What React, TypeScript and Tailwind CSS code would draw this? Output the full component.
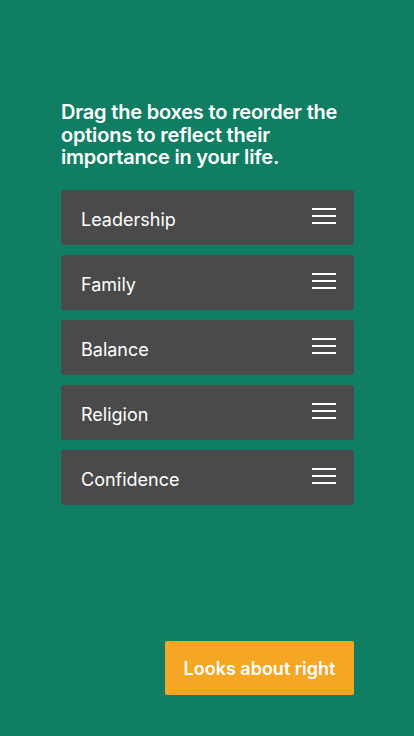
import React from 'react';

const options = ['Leadership', 'Family', 'Balance', 'Religion', 'Confidence'];

const Handle: React.FC = () => (
  <div className="flex flex-col gap-[5px] w-6 -mt-[3px]">
    <span className="block h-[2px] bg-white" />
    <span className="block h-[2px] bg-white" />
    <span className="block h-[2px] bg-white" />
  </div>
);

const App: React.FC = () => {
  return (
    <div
      className="min-h-screen bg-[#107e62] flex flex-col pl-[61px] pr-[60px] pt-[101px] pb-[41px]"
      style={{ fontFamily: 'Inter, "Noto Sans", sans-serif' }}
    >
      <h1 className="text-white font-semibold text-[20px] leading-[22.5px] tracking-[-0.2px]">
        Drag the boxes to reorder the options to reflect their importance in your life.
      </h1>

      <ul className="mt-[21px] flex flex-col gap-[10px]">
        {options.map((opt) => (
          <li
            key={opt}
            className="h-[55px] bg-[#4a4a4a] rounded-[3px] flex items-center justify-between pl-5 pr-[18px] cursor-grab"
          >
            <span className="text-white text-[18px] leading-none pt-[6px]">{opt}</span>
            <Handle />
          </li>
        ))}
      </ul>

      <div className="mt-auto flex justify-end">
        <button
          type="button"
          className="h-[54px] w-[189px] bg-[#f5a623] rounded-[2px] text-white font-semibold text-[18px]"
        >
          Looks about right
        </button>
      </div>
    </div>
  );
};

export default App;
